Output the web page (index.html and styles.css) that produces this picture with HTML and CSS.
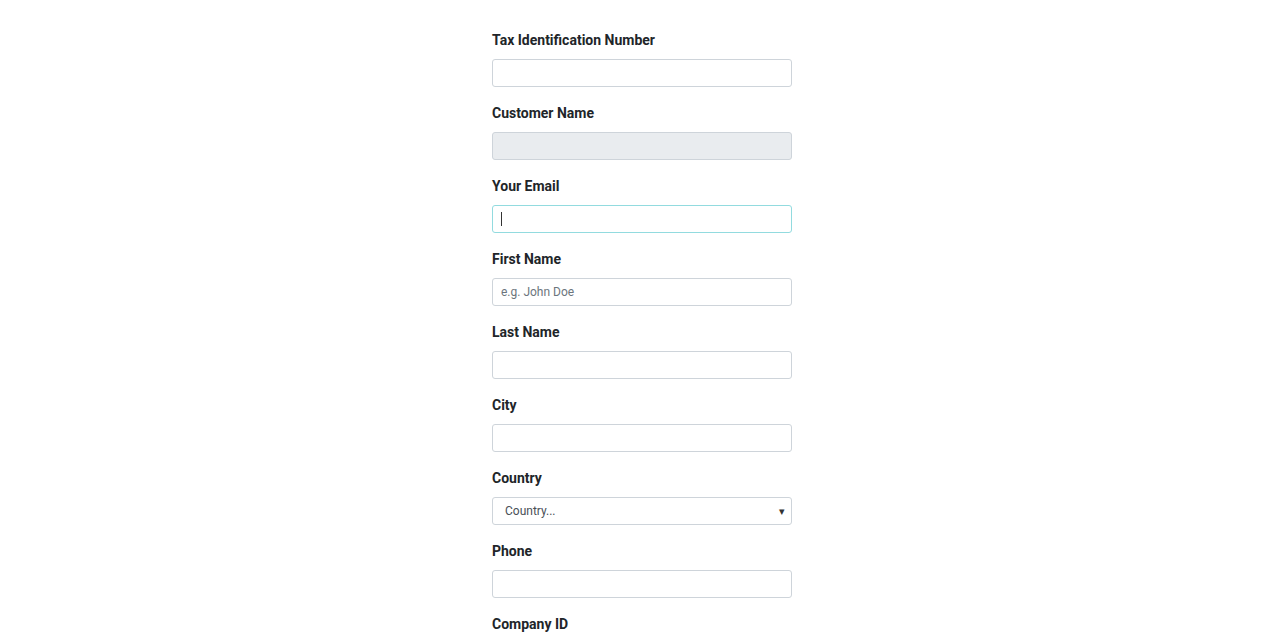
FILE: index.html
```html
<!DOCTYPE html>
<html>
<head>
<meta charset="utf-8">
<link rel="stylesheet" href="styles.css">
</head>
<body>
<form class="form">
  <div class="group">
    <label class="label">Tax Identification Number</label>
    <input class="input" type="text">
  </div>
  <div class="group">
    <label class="label">Customer Name</label>
    <input class="input input-disabled" type="text" disabled>
  </div>
  <div class="group">
    <label class="label">Your Email</label>
    <div class="field-wrap">
      <input class="input input-focus" type="email">
      <span class="caret"></span>
    </div>
  </div>
  <div class="group">
    <label class="label">First Name</label>
    <input class="input" type="text" placeholder="e.g. John Doe">
  </div>
  <div class="group">
    <label class="label">Last Name</label>
    <input class="input" type="text">
  </div>
  <div class="group">
    <label class="label">City</label>
    <input class="input" type="text">
  </div>
  <div class="group">
    <label class="label">Country</label>
    <div class="select">
      <span class="select-text">Country...</span>
      <span class="select-arrow">&#9662;</span>
    </div>
  </div>
  <div class="group">
    <label class="label">Phone</label>
    <input class="input" type="text">
  </div>
  <div class="group">
    <label class="label">Company ID</label>
    <input class="input" type="text">
  </div>
</form>
</body>
</html>
```
FILE: styles.css
```css
html, body {
  margin: 0;
  padding: 0;
  background: #ffffff;
  font-family: Roboto, "Liberation Sans", sans-serif;
  color: #212529;
}
body {
  overflow: hidden;
  height: 637px;
}
.form {
  width: 300px;
  margin: 0 auto;
  padding-top: 30px;
  display: flex;
  flex-direction: column;
  gap: 16px;
}
.group {
  display: flex;
  flex-direction: column;
  gap: 8px;
}
.label {
  font-size: 14px;
  font-weight: 700;
  line-height: 21px;
  color: #212529;
}
.input {
  box-sizing: border-box;
  width: 300px;
  height: 28px;
  margin: 0;
  border: 1px solid #ced4da;
  border-radius: 3px;
  padding: 0 8px;
  font-family: Roboto, "Liberation Sans", sans-serif;
  font-size: 12px;
  color: #495057;
  background: #ffffff;
  outline: none;
}
.input::placeholder {
  color: #6c757d;
  opacity: 1;
}
.input-disabled {
  background: #e9ecef;
}
.input-focus {
  border-color: #92dbdf;
}
.field-wrap {
  position: relative;
  height: 28px;
}
.caret {
  position: absolute;
  left: 9px;
  top: 7px;
  width: 1px;
  height: 14px;
  background: #333;
}
.select {
  box-sizing: border-box;
  width: 300px;
  height: 28px;
  border: 1px solid #ced4da;
  border-radius: 3px;
  padding: 0 6px 0 12px;
  display: flex;
  align-items: center;
  justify-content: space-between;
  font-size: 12px;
  color: #495057;
}
.select-arrow {
  font-size: 11px;
  color: #333;
}
```
